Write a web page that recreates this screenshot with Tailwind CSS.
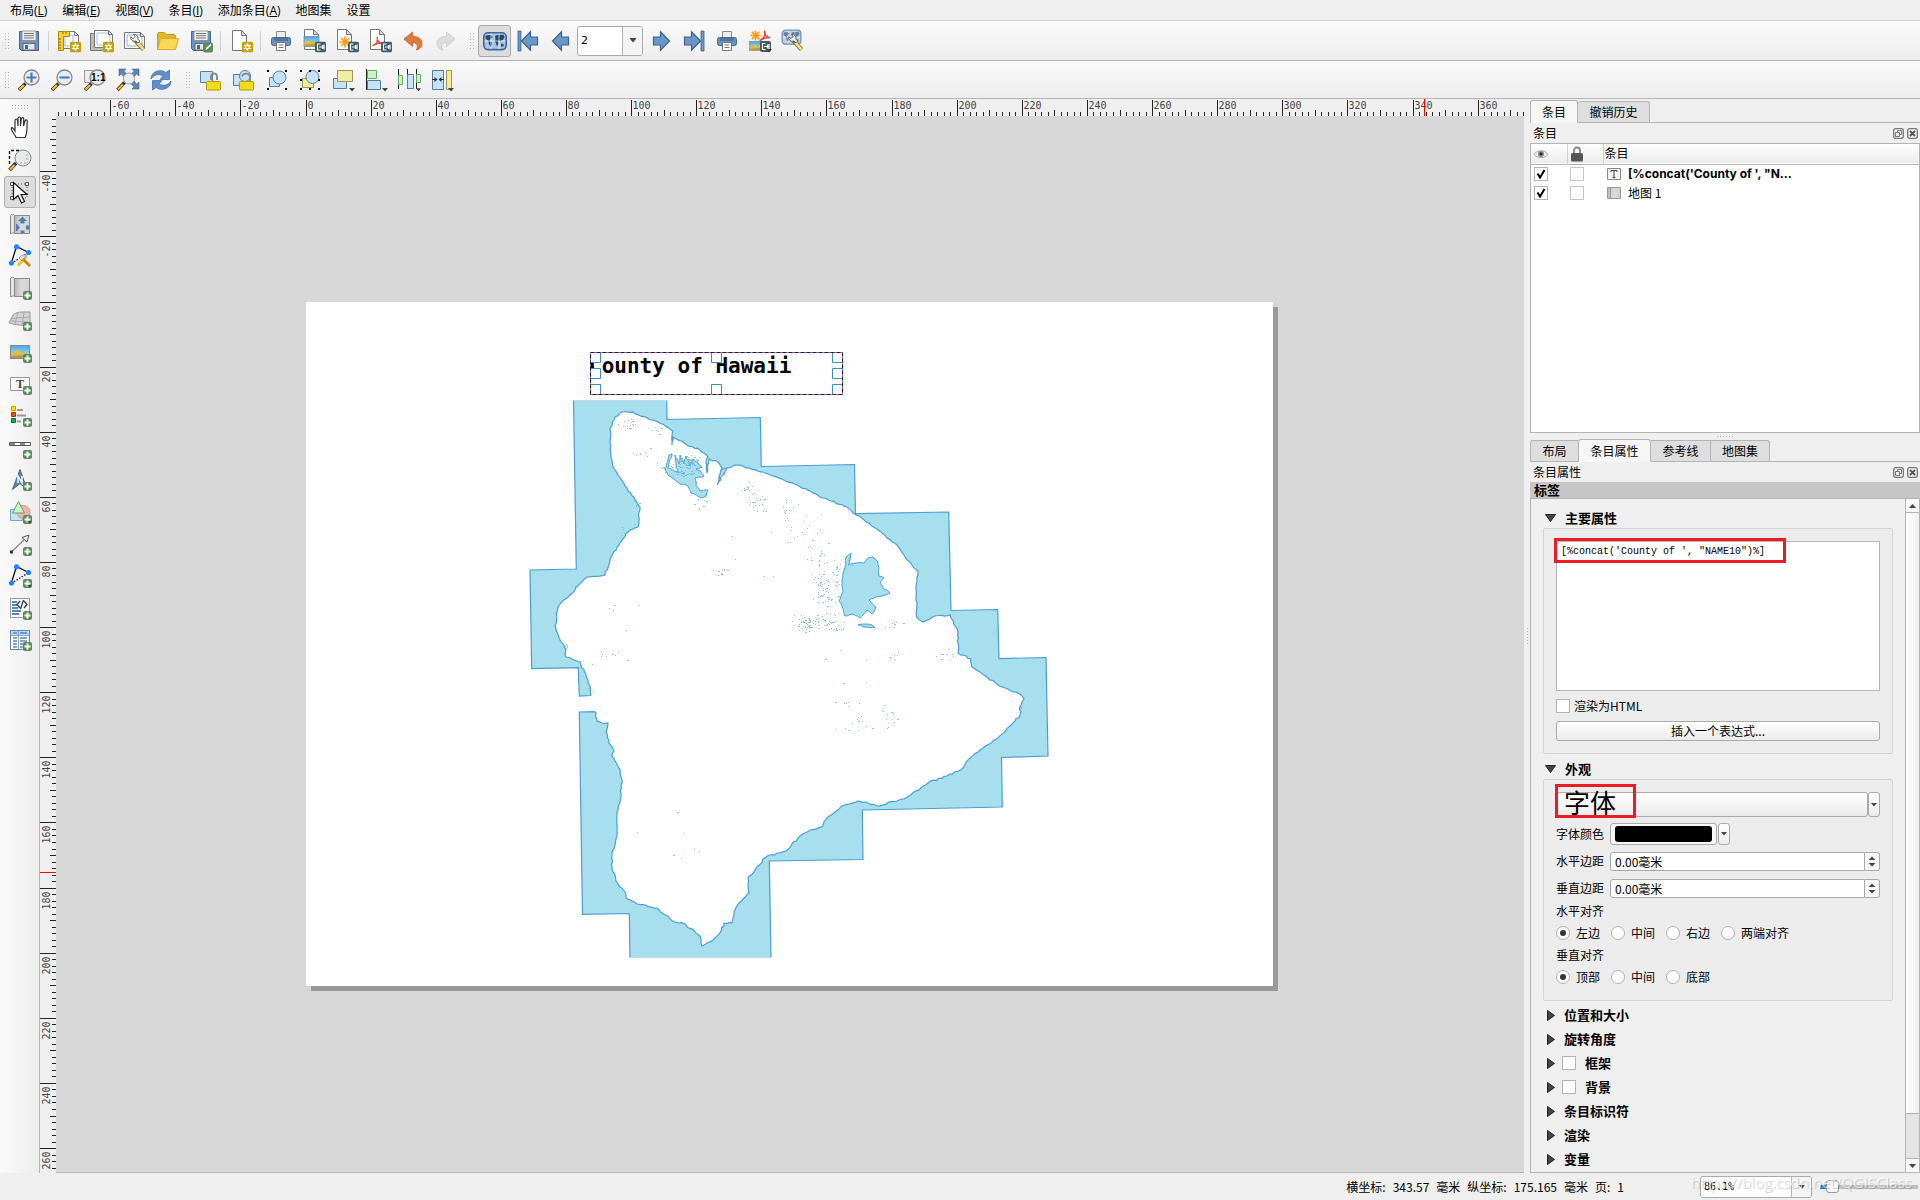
<!DOCTYPE html>
<html lang="zh-CN">
<head>
<meta charset="utf-8">
<title>布局 - 地图集</title>
<script src="https://cdn.jsdelivr.net/npm/@tailwindcss/browser@4"></script>
</head>
<body class="flex h-screen flex-col overflow-hidden bg-[#efefef] font-['Noto_Sans_CJK_SC',sans-serif] text-[12px] leading-[16px] text-black">

<svg class="absolute size-0" aria-hidden="true">
  <defs>
    <linearGradient id="g-paper" x1="0" x2="1"><stop offset="0" stop-color="#b5b5b5"/><stop offset=".45" stop-color="#dcdcdc"/><stop offset="1" stop-color="#d2d2d2"/></linearGradient>
    <linearGradient id="g-sky" x1="0" y1="0" x2="0" y2="1"><stop offset="0" stop-color="#3fa9f5"/><stop offset=".6" stop-color="#8fd0f5"/></linearGradient>
    <symbol id="b-plus" viewBox="0 0 9 9"><rect width="9" height="9" rx="2" fill="#5a8c5a"/><path d="M4.5 1.5v6M1.500 4.500h6" stroke="#fff" stroke-width="2"/></symbol>
    <symbol id="b-star" viewBox="0 0 11 11"><rect width="11" height="11" rx="1.500" fill="#c4a000"/><path d="M5.500 1.500v8M2 3.500l7 4M2 7.500l7-4" stroke="#fff" stroke-width="1.400"/><circle cx="5.500" cy="5.500" r="2.600" fill="#fff"/><circle cx="5.500" cy="5.500" r="1.200" fill="#c4a000"/></symbol>
    <symbol id="b-exp" viewBox="0 0 11 11"><rect width="11" height="11" rx="2" fill="#415a6b"/><path d="M5.500 2.500H2.500v6h3M4 5.500h5M7.500 3.500v4M9 3v5" stroke="#fff" stroke-width="1.200" fill="none"/></symbol>
    <symbol id="page" viewBox="0 0 24 24"><path d="M4.500 1.500h9l5 5v15h-14z" fill="#fff" stroke="#777"/><path d="M13.500 1.500v5h5z" fill="#ddd" stroke="#777"/></symbol>
    <symbol id="floppy" viewBox="0 0 24 24"><path d="M2.500 2.500h19v19H4.500l-2-2z" fill="#6b93c2" stroke="#48678c"/><path d="M5 2h14v9.500H5z" fill="#eee" stroke="#888" stroke-width=".8"/><path d="M7 4.500h10M7 6.700h10M7 9h10" stroke="#777"/><path d="M6 14.500h12v6.500H6z" fill="#e4e4e4" stroke="#555" stroke-width=".8"/><path d="M8 16h3v4H8z" fill="#48678c"/></symbol>
    <symbol id="wrench" viewBox="0 0 24 24"><path d="M11 10l9.500 10.500" stroke="#7a6a30" stroke-width="4.600"/><path d="M14 13l6.500 7.500" stroke="#f0dc82" stroke-width="3"/><path d="M7 7a4 4 0 0 0 5.500 4.500l2 2 2-2-2-2A4 4 0 0 0 10 4.500l1.500 2.500-2 2z" fill="#eee" stroke="#555" stroke-width=".9"/></symbol>
    <symbol id="lens" viewBox="0 0 24 24"><path d="M8.500 15.500L2 22" stroke="#333" stroke-width="3.600"/><path d="M7 17l-4.500 4.500" stroke="#f2b632" stroke-width="2.400"/><circle cx="14.500" cy="9.500" r="7.500" fill="#e8ecee" fill-opacity=".92" stroke="#888" stroke-width="1.300"/></symbol>
    <symbol id="printer" viewBox="0 0 24 24"><path d="M7.500 2.500h9v7h-9z" fill="#eee" stroke="#888"/><rect x="2.500" y="8.500" width="19" height="8" rx="2" fill="#6b93c2" stroke="#48678c"/><path d="M5 9h14v3H5z" fill="#4f76a5"/><path d="M7.500 13.500h9v8h-9z" fill="#fff" stroke="#777"/><path d="M9.500 16h5M9.500 18.500h5" stroke="#777"/></symbol>
    <symbol id="pic" viewBox="0 0 20 14"><rect x=".5" y=".5" width="19" height="13" fill="url(#g-sky)" stroke="#888"/><path d="M1 8l6-3.500 6 3 6 2V13H1z" fill="#d6bf4e"/><path d="M1 11l18-1v3H1z" fill="#b09a3c"/></symbol>
    <symbol id="globe" viewBox="0 0 24 24"><rect x=".8" y="3.800" width="22.400" height="16.800" rx="4" fill="#a9c4e4" stroke="#3f6698" stroke-width="1.600"/><path d="M2.500 6.500l5-.5 2.500 2-3 2.500L6.500 12l2.500 1.500L8 18l-2-2.500-.5-3.500-3-2.500zM12 7l2-1 6.500-.3 1 2.300-1.500 3-2 .5-.5 1.500-1.500-1.500-1 .5.500 2.500-1.500 3-1-3-1-2 .5-2.500z" fill="#24486e"/><path d="M18 14.500l2.500.5v2.500H18z" fill="#24486e"/><path d="M8 4.500v15.500M16 4.500v15.500M1.500 12h21" stroke="#fff" stroke-width=".8" opacity=".8"/></symbol>
    <symbol id="arrowL" viewBox="0 0 24 24"><path d="M3.500 12L12.500 2.800V8h7v8h-7v5.200z" fill="#6b97c8" stroke="#3f6287" stroke-width="1.200"/></symbol>
    <symbol id="scroll" viewBox="0 0 24 24"><path d="M6.500 3.500h15v18h-15z" fill="url(#g-paper)" stroke="#8a8a8a"/><path d="M2.500 3.500c0-1.500 4-1.500 4 0v16c0 1-1.500 2-4 2z" fill="#e4e4e4" stroke="#8a8a8a"/></symbol>
    <symbol id="nodes" viewBox="0 0 24 24"><path d="M3.500 18.500l5-16 12 6" fill="none" stroke="#111" stroke-width="1.300"/><path d="M20 9L4 19" stroke="#111" stroke-width="1.300" stroke-dasharray="1.500 1.500"/><g fill="#2a7fff"><circle cx="3.500" cy="19" r="2.600"/><circle cx="8.500" cy="2.800" r="2.600"/><circle cx="20.500" cy="8.500" r="2.600"/></g></symbol>
    <symbol id="lock" viewBox="0 0 12 16"><path d="M3 8V4.500a3 3 0 0 1 6 0V8" fill="none" stroke="#888" stroke-width="1.900"/></symbol>
    <symbol id="drop" viewBox="0 0 6 4"><path d="M0 0h6L3 3.600z" fill="#444"/></symbol>
    <symbol id="eight" viewBox="0 0 24 24"><path d="M2 2h2v2H2zM11 2h2v2h-2zM20 2h2v2h-2zM2 20h2v2H2zM11 20h2v2h-2zM20 20h2v2h-2zM2 11h2v2H2zM20 11h2v2h-2z"/></symbol>
    <symbol id="pdfmark" viewBox="0 0 12 12"><path d="M5.500.8c1.500 4-1 8-4.800 10 3-2.800 6-3.500 10.500-3-4-.5-5.700-3-5.700-7z" fill="none" stroke="#e8392c" stroke-width="1.300"/></symbol>
    <symbol id="aster" viewBox="0 0 12 12"><path d="M6 .5v11M.5 6h11M2 2l8 8M10 2l-8 8" stroke="#ff9a0a" stroke-width="1.700"/></symbol>
    <symbol id="dock-float" viewBox="0 0 11 11"><rect x=".7" y=".7" width="9.600" height="9.600" rx="2" fill="#f2f2f2" stroke="#777" stroke-width="1.300"/><path d="M4.500 4.500v-2h4v4h-2M2.500 4.500h4v4h-4z" fill="none" stroke="#777"/></symbol>
    <symbol id="dock-close" viewBox="0 0 11 11"><rect x=".7" y=".7" width="9.600" height="9.600" rx="2" fill="#f2f2f2" stroke="#777" stroke-width="1.300"/><path d="M3 3l5 5M8 3L3 8" stroke="#555" stroke-width="1.900"/></symbol>
    <pattern id="dots" width="3" height="3" patternUnits="userSpaceOnUse"><rect x="1" y="1" width="1" height="1" fill="#b4b4b4"/></pattern>
  </defs>
</svg>

<nav class="flex h-[21px] shrink-0 items-center gap-[15px] border-b border-[#d4d4d4] pl-[10px] pt-px font-['Open_Sans','Noto_Sans_CJK_SC',sans-serif]">
  <button>布局(<u>L</u>)</button><button>编辑(<u>E</u>)</button><button>视图(<u>V</u>)</button><button>条目(<u>I</u>)</button><button>添加条目(<u>A</u>)</button><button>地图集</button><button>设置</button>
</nav>

<div role="toolbar" class="flex h-[40px] shrink-0 items-center border-b border-[#b4b4b4] bg-linear-to-b from-[#fafafa] to-[#ededed] [&>button]:grid [&>button]:h-8 [&>button]:w-[33px] [&>button]:place-items-center [&>button>svg]:size-6">
  <svg class="ml-1 mr-[2px] h-[18px] w-[6px]"><rect width="6" height="18" fill="url(#dots)"/></svg>
  <button aria-label="保存"><svg><use href="#floppy"/></svg></button>
  <i class="mx-[3px] h-5 w-px bg-[#d0d0d0]"></i>
  <button aria-label="新建布局"><svg viewBox="0 0 24 24"><path d="M5.500 2.500h12l4 4v13h-16z" fill="#fff" stroke="#777"/><path d="M8 6h8v11H8z" fill="#fff" stroke="#9bb7dd"/><path d="M17.500 2.500v4h4z" fill="#ddd" stroke="#777"/><path d="M1.500 2.500h11v5h-6v14h-5z" fill="#f2cf3c" stroke="#b28c00"/><path d="M2 10h2M2 13h2M2 16h2M2 19h2M6 3v2M9 3v2" stroke="#8a6d00"/><use href="#b-star" x="13" y="12.500" width="11" height="11"/></svg></button>
  <button aria-label="复制布局"><svg viewBox="0 0 24 24"><path d="M.5 4.500h15v17H.5z" fill="#bbb" stroke="#777"/><path d="M4.500 1.500h14l4 4v13h-18z" fill="#fff" stroke="#777"/><path d="M7 4h11l2 3v9H7z" fill="#fff" stroke="#a9c0e2"/><path d="M18.500 1.500v4h4z" fill="#ddd" stroke="#777"/><use href="#b-star" x="13" y="12.500" width="11" height="11"/></svg></button>
  <button aria-label="布局管理器"><svg viewBox="0 0 24 24"><path d="M1.500 3.500h16l4 4v12h-20z" fill="#fff" stroke="#777"/><path d="M4 6h13l2 3v8H4z" fill="#fff" stroke="#8fb0e0"/><path d="M17.500 3.500v4h4z" fill="#ddd" stroke="#777"/><use href="#wrench" x="1" y="1" width="23" height="23"/></svg></button>
  <button aria-label="从模板添加"><svg viewBox="0 0 24 24"><path d="M1.500 20.500v-16l1-1h6l2 2h8l1 1v3" fill="#e0b52f" stroke="#c79a20"/><path d="M1.500 20.500l3-11h18l-3 11z" fill="#fbd758" stroke="#d6a92c"/></svg></button>
  <button aria-label="另存为模板"><svg viewBox="0 0 24 24"><use href="#floppy"/><rect x="14" y="13.500" width="10" height="10" rx="2" fill="#5a8c5a"/><path d="M16.500 21l1-2.500 4-3.500 1 1-4 4z" fill="#fff"/></svg></button>
  <i class="ml-[3px] mr-1 h-5 w-px bg-[#d0d0d0]"></i>
  <button aria-label="添加页"><svg viewBox="0 0 24 24"><use href="#page" x="-2"/><use href="#b-star" x="12" y="12.500" width="11" height="11"/></svg></button>
  <i class="ml-[2px] mr-[3px] h-5 w-px bg-[#d0d0d0]"></i>
  <button aria-label="打印"><svg><use href="#printer"/></svg></button>
  <button aria-label="导出图像"><svg viewBox="0 0 24 24"><use href="#page" x="-2" y="-1"/><use href="#pic" x="1" y="7" width="17" height="11"/><use href="#b-exp" x="13" y="12.500" width="11" height="11"/></svg></button>
  <button aria-label="导出SVG"><svg viewBox="0 0 24 24"><use href="#page" x="-2" y="-1"/><use href="#aster" x="4" y="7" width="12" height="12"/><use href="#b-exp" x="13" y="12.500" width="11" height="11"/></svg></button>
  <button aria-label="导出PDF"><svg viewBox="0 0 24 24"><use href="#page" x="-2" y="-1"/><use href="#pdfmark" x="4" y="7" width="11" height="11"/><use href="#b-exp" x="13" y="12.500" width="11" height="11"/></svg></button>
  <button aria-label="撤销"><svg viewBox="0 0 24 24"><path d="M3 10l8.500-7v4.500c6 0 9.500 2.500 9.500 7 0 3.500-2.500 6-6 6.500 2-2 2.500-7-3.500-7.500v4z" fill="#e07b39" stroke="#c0602a" stroke-width=".8"/></svg></button>
  <button aria-label="重做"><svg viewBox="0 0 24 24"><path d="M21 10l-8.500-7v4.500c-6 0-9.500 2.500-9.500 7 0 3.500 2.500 6 6 6.500-2-2-2.500-7 3.500-7.500v4z" fill="#dcdedc" stroke="#c8cac8" stroke-width=".8"/></svg></button>
  <svg class="ml-[7px] mr-[3px] h-[18px] w-[6px]"><rect width="6" height="18" fill="url(#dots)"/></svg>
  <button aria-label="预览地图集" class="rounded-[3px] border border-[#a8a8a8] bg-[#dcdcdc]"><svg><use href="#globe"/></svg></button>
  <button aria-label="第一个"><svg viewBox="0 0 24 24"><path d="M2 2h3v20H2z" fill="#6b97c8" stroke="#3f6287" stroke-width=".8"/><use href="#arrowL" x="2"/></svg></button>
  <button aria-label="上一个"><svg><use href="#arrowL"/></svg></button>
  <span class="mr-px grid h-[30px] w-[66px]">
    <select aria-label="页面" class="col-start-1 row-start-1 appearance-none rounded-[3px] border border-[#aaa] bg-white pl-[3px] font-['DejaVu_Sans',sans-serif] text-[11px]"><option>2</option></select>
    <span class="pointer-events-none col-start-1 row-start-1 my-px mr-px grid w-5 place-items-center justify-self-end rounded-r-[2px] border-l border-[#b4b4b4] bg-[#f4f4f4]"><svg class="h-[5px] w-2" viewBox="0 0 6 4"><use href="#drop"/></svg></span>
  </span>
  <button aria-label="下一个"><svg viewBox="0 0 24 24"><use href="#arrowL" transform="matrix(-1 0 0 1 24 0)"/></svg></button>
  <button aria-label="最后一个"><svg viewBox="0 0 24 24"><path d="M19 2h3v20h-3z" fill="#6b97c8" stroke="#3f6287" stroke-width=".8"/><use href="#arrowL" transform="matrix(-1 0 0 1 22 0)"/></svg></button>
  <button aria-label="打印地图集"><svg><use href="#printer"/></svg></button>
  <button aria-label="导出地图集"><svg viewBox="0 0 24 24"><use href="#aster" x="2" y="1" width="11" height="11"/><use href="#pdfmark" x="11" y="1" width="12" height="12"/><use href="#pic" x="1" y="12" width="14" height="10"/><use href="#b-exp" x="12" y="12" width="11" height="11"/><use href="#drop" x="18" y="20" width="6" height="4"/></svg></button>
  <button aria-label="地图集设置"><svg viewBox="0 0 24 24"><use href="#globe" x="0" y="-2" width="21" height="20" opacity=".7"/><use href="#wrench" x="1" y="1" width="23" height="23"/></svg></button>
</div>

<div role="toolbar" class="flex h-[38px] shrink-0 items-center border-b border-[#b4b4b4] bg-linear-to-b from-[#fafafa] to-[#ededed] [&>button]:grid [&>button]:h-8 [&>button]:w-[33px] [&>button]:place-items-center [&>button>svg]:size-6">
  <svg class="ml-1 mr-[2px] h-[18px] w-[6px]"><rect width="6" height="18" fill="url(#dots)"/></svg>
  <button aria-label="放大"><svg viewBox="0 0 24 24"><use href="#lens"/><path d="M14.500 4.500v10M9.500 9.500h10" stroke="#4a7db5" stroke-width="2.200"/></svg></button>
  <button aria-label="缩小"><svg viewBox="0 0 24 24"><use href="#lens"/><path d="M9.500 9.500h10" stroke="#4a7db5" stroke-width="2.200"/></svg></button>
  <button aria-label="缩放到100%"><svg viewBox="0 0 24 24"><path d="M1.500 2.500h9v12h-9z" fill="#eee" stroke="#999"/><use href="#lens"/><text x="8" y="13" font-family="Liberation Sans" font-weight="bold" font-size="10">1:1</text></svg></button>
  <button aria-label="全图"><svg viewBox="0 0 24 24"><g fill="#5b86b8" stroke="#3f6287" stroke-width=".6"><path d="M3 1h7L7.800 3.200 12 7 9 10 5.200 5.800 3 8zM23 1v7l-2.200-2.200L17 10l-3-3 4.200-3.800L16 1zM23 21h-7l2.200-2.200L14 15l3-3 3.800 4.200L23 14z"/></g><circle cx="13" cy="10.500" r="5.500" fill="#e8ecee" stroke="#999"/><path d="M8.500 14.500L1.500 22" stroke="#333" stroke-width="3.400"/><path d="M7 16.500l-5 5" stroke="#f2b632" stroke-width="2.200"/></svg></button>
  <button aria-label="刷新"><svg viewBox="0 0 24 24"><path d="M2 11C2 5 8 1.500 14 3l3 1.500L20.500 2v9.500H11l3-3.500C10 5.500 5 6.500 2 11z" fill="#5f8fca" stroke="#4573ab" stroke-width=".8"/><path d="M22 13c0 6-6 9.500-12 8l-3-1.500L3.500 22v-9.500H13l-3 3.500c4 2.500 9 1.500 12-3z" fill="#5f8fca" stroke="#4573ab" stroke-width=".8"/></svg></button>
  <svg class="ml-2 mr-[3px] h-[18px] w-[6px]"><rect width="6" height="18" fill="url(#dots)"/></svg>
  <button aria-label="锁定"><svg viewBox="0 0 24 24"><path d="M1.500 3.500h12v11h-12z" fill="#c6e2f8" stroke="#5a7d96"/><use href="#lock" x="9" y="4" width="12" height="16"/><rect x="7.500" y="13.500" width="14" height="8.500" rx="1" fill="#f0dc1e" stroke="#b49a00"/></svg></button>
  <button aria-label="解锁"><svg viewBox="0 0 24 24"><path d="M1.500 6.500h9v11h-9z" fill="#c6e2f8" stroke="#5a7d96"/><circle cx="13" cy="8" r="5.500" fill="#c6e2f8" stroke="#5a7d96"/><path d="M10 8.500c1-4 8-4 8 1v4" fill="none" stroke="#888" stroke-width="1.900"/><rect x="7.500" y="13.500" width="14" height="8.500" rx="1" fill="#f0dc1e" stroke="#b49a00"/></svg></button>
  <button aria-label="组合"><svg viewBox="0 0 24 24"><path d="M4.500 9.500h10v9h-10z" fill="#c6e2f8" stroke="#5a7d96"/><circle cx="14.500" cy="9.500" r="6.500" fill="#c6e2f8" stroke="#5a7d96"/><path d="M2 2h2v2H2zM20 2h2v2h-2zM2 20h2v2H2zM20 20h2v2h-2z"/></svg></button>
  <button aria-label="取消组合"><svg viewBox="0 0 24 24"><path d="M4.500 10.500h11v9h-11z" fill="#f0eda0" stroke="#9a9650"/><circle cx="14.500" cy="9" r="6.500" fill="#c6e2f8" stroke="#5a7d96"/><use href="#eight"/></svg></button>
  <button aria-label="置顶"><svg viewBox="0 0 24 24"><path d="M2.500 10.500h13v10h-13z" fill="#c6e2f8" stroke="#5a7d96"/><path d="M6.500 2.500h15v11h-15z" fill="#f0eda0" stroke="#9a9650"/><use href="#drop" x="18" y="20" width="6" height="4"/></svg></button>
  <button aria-label="左对齐"><svg viewBox="0 0 24 24"><path d="M2.500 1v21" stroke="#222"/><path d="M3.500 2.500h9v8h-9z" fill="#c8f5c8" stroke="#6aa86a"/><path d="M3.500 12.500h13v9h-13z" fill="#c6e2f8" stroke="#5a7d96"/><use href="#drop" x="18" y="20" width="6" height="4"/></svg></button>
  <button aria-label="分布"><svg viewBox="0 0 24 24"><path d="M1.500 1v20M10.500 1v20M19.500 1v20" stroke="#222"/><path d="M1.500 7.500h4v9h-4zM19.500 6.500h4v8h-4z" fill="#c8f5c8" stroke="#6aa86a"/><path d="M10.500 6.500h6v14h-6z" fill="#c6e2f8" stroke="#5a7d96"/><use href="#drop" x="19" y="20" width="5" height="4"/></svg></button>
  <button aria-label="调整大小"><svg viewBox="0 0 24 24"><path d="M2.500 2.500h11v19h-11z" fill="#c6e2f8" stroke="#5a7d96"/><path d="M16.500 2.500h5v19h-5z" fill="#f0eda0" stroke="#9a9650"/><path d="M2 11.500h4M14 11.500h-4" stroke="#333"/><path d="M4.500 9l3 2.500-3 2.500zM11.500 9l-3 2.500 3 2.500z" fill="#333"/><use href="#drop" x="18" y="20" width="6" height="4"/></svg></button>
</div>

<main class="flex min-h-0 flex-1">
  <div role="toolbar" aria-orientation="vertical" class="flex w-10 shrink-0 flex-col items-center border-r border-[#b4b4b4] bg-linear-to-r from-[#fafafa] to-[#ededed] [&>button]:grid [&>button]:size-8 [&>button]:shrink-0 [&>button]:place-items-center [&>button>svg]:size-6">
    <svg class="mb-[2px] mt-[5px] h-[6px] w-[18px]"><rect width="18" height="6" fill="url(#dots)"/></svg>
    <button aria-label="平移"><svg viewBox="0 0 24 24"><path d="M8 21.500c-1-3-3.500-5-4.500-8-.7-2.500 1-2.500 2.500 0L7 15V4.500c0-2 2.200-2 2.500 0L10 10V2.500c.2-2 2.500-2 2.500 0V10l.8-7c.3-2 2.500-1.500 2.400 0L15.500 10l1.500-5c.7-1.800 2.600-1 2.300.6C18.500 11 20 16 17 21.500z" fill="#fff" stroke="#333" stroke-width="1.200"/></svg></button>
    <button aria-label="缩放"><svg viewBox="0 0 24 24"><path d="M1.500 16V2.500H12" fill="none" stroke="#111" stroke-width="1.400" stroke-dasharray="3 2"/><path d="M8 15L1.500 22" stroke="#333" stroke-width="3.600"/><path d="M6.500 17l-4.500 4.500" stroke="#f2b632" stroke-width="2.200"/><circle cx="15" cy="10" r="8" fill="#e6e9ea" stroke="#888"/><path d="M8 15h10M19 6v9" stroke="#aaa" stroke-dasharray="2 2"/></svg></button>
    <button aria-label="选择" class="rounded-[3px] border border-[#b0b0b0] bg-[#dcdcdc]"><svg viewBox="0 0 24 24"><path d="M4 4h15v14H4z" fill="none" stroke="#555" stroke-dasharray="1 2"/><path d="M2.500 2.500h3v3h-3zM17.500 2.500h3v3h-3zM2.500 16.500h3v3h-3z" fill="#eee" stroke="#555"/><path d="M5.500 2.500v17l4.500-4 3.500 7.500 3-1.500-3.500-7h6z" fill="#fff" stroke="#111" stroke-width="1.200"/></svg></button>
    <button aria-label="移动内容"><svg viewBox="0 0 24 24"><use href="#scroll"/><path d="M14.500 4.500l4.500 4.500h-2.500v2.500h-4V9H10zM8 12h1l3 3.500L9 19H8zM21 13.500v4h-3v-4zM12.500 18.500h4V21h-4z" fill="#4f7fb5"/></svg></button>
    <button aria-label="编辑节点"><svg viewBox="0 0 24 24"><use href="#nodes"/><path d="M10 21.500l8-9" stroke="#f5c518" stroke-width="3"/><path d="M14 14l8 8" stroke="#c98712" stroke-width="3"/><path d="M11 14c2-3 6-4 8-2l-3 2-2 3z" fill="#ddd" stroke="#888" stroke-width=".7"/></svg></button>
    <button aria-label="添加地图"><svg viewBox="0 0 24 24"><use href="#scroll" y="-1"/><use href="#b-plus" x="15" y="15" width="9" height="9"/></svg></button>
    <button aria-label="添加3D地图"><svg viewBox="0 0 24 24"><path d="M5 7c4-3.500 8-3 17-3v14c-6-1-10 0-21-3z" fill="#d4d4d4" stroke="#999"/><path d="M3 11c6-2 12-1 19-2M2 13c6 0 12 1 20 1M10 4L7 16M16 4l-2 14" stroke="#aaa" fill="none"/><use href="#b-plus" x="15" y="14" width="9" height="9"/></svg></button>
    <button aria-label="添加图片"><svg viewBox="0 0 24 24"><use href="#pic" x="2" y="5" width="20" height="14"/><use href="#b-plus" x="15" y="14" width="9" height="9"/></svg></button>
    <button aria-label="添加标签"><svg viewBox="0 0 24 24"><path d="M2.500 5.500h19v13h-19z" fill="#f6f6f6" stroke="#999"/><text x="8" y="16" font-family="Liberation Serif" font-weight="bold" font-size="12" fill="#444">T</text><use href="#b-plus" x="15" y="14" width="9" height="9"/></svg></button>
    <button aria-label="添加图例"><svg viewBox="0 0 24 24"><path d="M3.500 2.500h4v4h-4z" fill="#fce000" stroke="#d99100"/><path d="M3.500 8.500h4v4h-4z" fill="#f04e00" stroke="#b53000"/><path d="M3.500 14.500h4v4h-4z" fill="#00b050" stroke="#064"/><path d="M9 6h6M9 11.500h9M9 17.500h4" stroke="#999" stroke-width="2"/><use href="#b-plus" x="15" y="14" width="9" height="9"/></svg></button>
    <button aria-label="添加比例尺"><svg viewBox="0 0 24 24"><path d="M1.500 6.500h21v3h-21z" fill="#fff" stroke="#555"/><path d="M2 8h5M12 8h5" stroke="#888" stroke-width="2"/><use href="#b-plus" x="15" y="14" width="9" height="9"/></svg></button>
    <button aria-label="添加指北针"><svg viewBox="0 0 24 24"><path d="M12 1.500l7 20-7-6-7.500 6z" fill="#5f87b5" stroke="#3f6287"/><path d="M10 15V8l4 7V8" fill="none" stroke="#fff" stroke-width="1.500"/><use href="#b-plus" x="15" y="14" width="9" height="9"/></svg></button>
    <button aria-label="添加形状"><svg viewBox="0 0 24 24"><path d="M2.500 9.500h12v11h-12z" fill="#c6e2f8" stroke="#7aa5c8"/><circle cx="15.500" cy="12" r="6.500" fill="#f7b0ac" stroke="#e09090"/><path d="M10.500 1.500l6 11.500h-12z" fill="#c8f5c8" stroke="#5fa35f"/><use href="#b-plus" x="15" y="15" width="9" height="9"/><use href="#drop" x="19" y="21" width="5" height="3"/></svg></button>
    <button aria-label="添加箭头"><svg viewBox="0 0 24 24"><path d="M3.500 20L18 6" stroke="#888" stroke-width="1.300"/><path d="M21 3l-2 7-5-4.500z" fill="#f0f0f0" stroke="#555"/><path d="M2 18.500h3v3H2z" fill="#333"/><use href="#b-plus" x="15" y="15" width="9" height="9"/></svg></button>
    <button aria-label="添加节点"><svg viewBox="0 0 24 24"><use href="#nodes"/><use href="#b-plus" x="15" y="15" width="9" height="9"/><use href="#drop" x="19" y="21" width="5" height="3"/></svg></button>
    <button aria-label="添加HTML"><svg viewBox="0 0 24 24"><path d="M2.500 2.500h19v19h-19z" fill="#f6f6f6" stroke="#999"/><path d="M4 6h5M4 9h5M4 12h6M4 15h9M4 18h7" stroke="#5b86b8" stroke-width="1.800"/><path d="M12 5L9 8.500l3 3.500M16 5l3 3.500-3 3.500M15.500 4l-3 9" fill="none" stroke="#333" stroke-width="1.200"/><use href="#b-plus" x="15" y="15" width="9" height="9"/></svg></button>
    <button aria-label="添加属性表"><svg viewBox="0 0 24 24"><path d="M2.500 2.500h19v19h-19z" fill="#fff" stroke="#5b86b8"/><path d="M3 3h18v4H3z" fill="#b9d6f0"/><path d="M5 5h4M12 5h7M5 10h4M12 10h7M5 13h4M12 13h7M5 16h4M12 16h5M5 19h4M12 19h3" stroke="#5b86b8" stroke-width="1.300"/><path d="M10.500 3v18M3 7.500h18" stroke="#5b86b8" stroke-width=".7"/><use href="#b-plus" x="15" y="14" width="9" height="9"/></svg></button>
  </div>

  <section class="flex min-w-0 flex-1 flex-col" aria-label="画布">
    <div class="flex h-[17px] shrink-0">
      <div class="w-4 shrink-0"></div>
      <div class="min-w-0 flex-1"><svg id="hruler" class="block size-full font-['DejaVu_Sans_Mono',monospace] text-[10px]"></svg></div>
    </div>
    <div class="flex min-h-0 flex-1">
      <div class="w-4 shrink-0"><svg id="vruler" class="block size-full font-['DejaVu_Sans_Mono',monospace] text-[10px]"></svg></div>
      <div class="relative min-w-0 flex-1 overflow-hidden border-b border-[#b4b4b4] bg-[#d7d7d7]">
        <svg class="absolute left-[250px] top-[186px] h-[684px] w-[967px] bg-white shadow-[5px_5px_0_#999]" viewBox="306 302 967 684">
          <path id="island" fill="#a8dfee" stroke="#4a9fd0" stroke-width="1.200"/>
          <g id="lakes" fill="#a8dfee" stroke="#4a9fd0"></g>
          <path id="specks" fill="none" stroke="#6fb3dc" stroke-width="1" opacity=".8"/>
          <path d="M573 399.500h95M629 958.500h143" stroke="#fff" stroke-width="2"/>
          <text x="589" y="373" class="font-['DejaVu_Sans_Mono',monospace] text-[21px] font-bold">County of Hawaii</text>
          <g fill="#fff" stroke="#3a8fc4"><path d="M590.500 352.500h10v10h-10zM590.500 368.500h10v10h-10zM590.500 384.500h10v10h-10zM711.500 352.500h10v10h-10zM711.500 384.500h10v10h-10zM832.500 352.500h10v10h-10zM832.500 368.500h10v10h-10zM832.500 384.500h10v10h-10z"/></g>
          <path d="M590.500 352.500h252v42h-252z" fill="none" stroke="#4aa0d8"/>
          <path d="M590.500 352.500h252v42h-252z" fill="none" stroke="#5a0030" stroke-dasharray="4 2"/>
        </svg>
      </div>
    </div>
  </section>

  <div class="grid w-[6px] shrink-0 place-items-center"><svg class="h-[18px] w-[3px]"><rect width="3" height="18" fill="url(#dots)"/></svg></div>

  <aside class="flex w-[390px] shrink-0 flex-col">
    <div role="tablist" class="flex h-6 shrink-0 items-end border-b border-[#b4b4b4] pt-px">
      <button role="tab" class="-mb-px h-[23px] w-12 rounded-t-[3px] border border-b-0 border-[#b4b4b4] bg-[#f6f6f6]">条目</button>
      <button role="tab" class="h-[21px] w-[72px] rounded-t-[3px] border border-b-0 border-l-0 border-[#b4b4b4] bg-[#dedede]">撤销历史</button>
    </div>
    <div class="flex h-5 shrink-0 items-center gap-[3px] pl-[3px] pr-[2px]"><span class="flex-1">条目</span><button aria-label="浮动"><svg class="size-[11px]"><use href="#dock-float"/></svg></button><button aria-label="关闭"><svg class="size-[11px]"><use href="#dock-close"/></svg></button></div>
    <div class="h-[290px] shrink-0 border border-[#b4b4b4] bg-white">
      <table class="w-full table-fixed border-collapse text-left">
        <colgroup><col class="w-9"><col class="w-9"><col></colgroup>
        <thead><tr class="h-5 border-b border-[#b4b4b4] bg-linear-to-b from-[#fdfdfd] to-[#ececec]">
          <th class="border-r border-[#d0d0d0] p-0 pl-[2px]"><svg class="h-3 w-4" viewBox="0 0 16 12"><path d="M1 6.500C4 1.500 12 1.500 15 6.500 12 10.500 4 10.500 1 6.500z" fill="#eee" stroke="#aaa"/><circle cx="8" cy="6" r="3" fill="#888"/><circle cx="8" cy="6" r="1.400" fill="#222"/></svg></th>
          <th class="border-r border-[#d0d0d0] p-0 pl-[3px]"><svg class="h-4 w-3" viewBox="0 0 12 16"><use href="#lock"/><rect y="7" width="12" height="8.500" rx="1.500" fill="#555"/></svg></th>
          <th class="p-0 pb-[2px] pl-px font-normal">条目</th></tr></thead>
        <tbody>
          <tr class="h-[19px]"><td class="p-0 pl-[3px]"><span class="grid size-[14px]"><input type="checkbox" checked aria-label="可见" class="col-start-1 row-start-1 size-[14px] appearance-none border border-[#b4b4b4] bg-white"><svg class="pointer-events-none col-start-1 row-start-1 size-[14px]" viewBox="0 0 14 14"><path d="M3.500 6.500l2.500 4 4.500-7.500" fill="none" stroke="#000" stroke-width="2"/></svg></span></td>
            <td class="p-0 pl-[3px]"><input type="checkbox" aria-label="锁定" class="block size-[14px] appearance-none border border-[#c4c4c4] bg-white"></td>
            <td class="p-0"><span class="flex items-center gap-[7px] pl-1 font-['Inter','Noto_Sans_CJK_SC',sans-serif] font-bold"><svg class="h-3 w-[14px]" viewBox="0 0 14 12"><path d="M.5.5h13v11H.5z" fill="#f4f4f4" stroke="#888"/><path d="M4 4V2.500h6V4M7 2.500v7M5.500 9.500h3" fill="none" stroke="#444"/></svg>[%concat('County of ', "N...</span></td></tr>
          <tr class="h-[19px]"><td class="p-0 pl-[3px]"><span class="grid size-[14px]"><input type="checkbox" checked aria-label="可见" class="col-start-1 row-start-1 size-[14px] appearance-none border border-[#b4b4b4] bg-white"><svg class="pointer-events-none col-start-1 row-start-1 size-[14px]" viewBox="0 0 14 14"><path d="M3.500 6.500l2.500 4 4.500-7.500" fill="none" stroke="#000" stroke-width="2"/></svg></span></td>
            <td class="p-0 pl-[3px]"><input type="checkbox" aria-label="锁定" class="block size-[14px] appearance-none border border-[#c4c4c4] bg-white"></td>
            <td class="p-0"><span class="flex items-center gap-[7px] pl-1"><svg class="h-3 w-[14px]" viewBox="0 0 14 12"><path d="M.5.5h13v11H.5z" fill="url(#g-paper)" stroke="#999"/><path d="M3.500 1v10" stroke="#999"/></svg>地图 1</span></td></tr>
        </tbody>
      </table>
    </div>
    <div class="grid h-[6px] shrink-0 place-items-center"><svg class="h-[3px] w-[18px]"><rect width="18" height="3" fill="url(#dots)"/></svg></div>
    <div role="tablist" class="flex h-[23px] shrink-0 items-end border-b border-[#b4b4b4]">
      <button role="tab" class="h-[21px] w-12 rounded-tl-[3px] border border-b-0 border-r-0 border-[#b4b4b4] bg-[#dedede]">布局</button>
      <button role="tab" class="-mb-px h-[23px] w-[73px] rounded-t-[3px] border border-b-0 border-[#b4b4b4] bg-[#f6f6f6]">条目属性</button>
      <button role="tab" class="h-[21px] w-[60px] border border-b-0 border-l-0 border-[#b4b4b4] bg-[#dedede]">参考线</button>
      <button role="tab" class="h-[21px] w-[59px] rounded-tr-[3px] border border-b-0 border-l-0 border-[#b4b4b4] bg-[#dedede]">地图集</button>
    </div>
    <div class="flex h-5 shrink-0 items-center gap-[3px] pl-[3px] pr-[2px]"><span class="flex-1">条目属性</span><button aria-label="浮动"><svg class="size-[11px]"><use href="#dock-float"/></svg></button><button aria-label="关闭"><svg class="size-[11px]"><use href="#dock-close"/></svg></button></div>
    <h2 class="h-4 shrink-0 bg-[#c6c6c6] pl-1 text-[13px] font-bold leading-[15px]">标签</h2>
    <div class="flex min-h-0 flex-1 border border-[#b4b4b4]">
      <div class="min-w-0 flex-1 overflow-hidden px-3">
        <h3 class="mt-[11px] flex h-4 items-center gap-[9px] pl-[2px] text-[13px] font-bold"><svg class="h-2 w-[11px]" viewBox="0 0 11 8"><path d="M.5.5h10l-5 7z" fill="#444" stroke="#222"/></svg>主要属性</h3>
        <div class="relative mt-[2px] flex h-[226px] flex-col rounded-[2px] border border-[#d4d4d4] bg-[#ececec] px-3 pt-3">
          <textarea aria-label="标签文本" class="h-[150px] resize-none border border-[#b4b4b4] bg-white px-1 py-[3px] font-['Liberation_Mono',monospace] text-[10px] leading-[14px]">[%concat('County of ', "NAME10")%]</textarea>
          <div class="pointer-events-none absolute left-[10px] top-[9px] h-[25px] w-[232px] border-3 border-[#ed1c24]"></div>
          <label class="mt-[7px] flex h-4 items-center gap-1"><input type="checkbox" class="size-[14px] appearance-none border border-[#b4b4b4] bg-white">渲染为HTML</label>
          <button class="mt-[7px] h-5 rounded-[3px] border border-[#aaa] bg-linear-to-b from-white to-[#ebebeb] leading-[18px]">插入一个表达式...</button>
        </div>
        <h3 class="mt-[7px] flex h-4 items-center gap-[9px] pl-[2px] text-[13px] font-bold"><svg class="h-2 w-[11px]" viewBox="0 0 11 8"><path d="M.5.5h10l-5 7z" fill="#444" stroke="#222"/></svg>外观</h3>
        <div class="relative mt-[2px] flex h-[222px] flex-col rounded-[2px] border border-[#d4d4d4] bg-[#ececec] px-3 pt-3">
          <div class="flex h-[25px]"><button class="flex-1 rounded-[3px] border border-[#aaa] bg-linear-to-b from-white to-[#ebebeb] pl-[7px] text-left font-['Liberation_Serif','Noto_Sans_CJK_SC',serif] text-[26px] leading-[22px]">字体</button><button aria-label="字体菜单" class="grid w-3 place-items-center rounded-[3px] border border-[#aaa] bg-linear-to-b from-white to-[#ebebeb]"><svg class="h-1 w-[6px]"><use href="#drop"/></svg></button></div>
          <div class="pointer-events-none absolute left-[11px] top-1 h-[34px] w-[81px] border-3 border-[#ed1c24]"></div>
          <div class="mt-[6px] flex h-[22px] items-center"><span class="w-[54px]">字体颜色</span><button aria-label="字体颜色" class="h-[22px] w-[107px] rounded-[3px] border border-[#aaa] bg-[#f8f8f8] px-1 py-[2px]"><span class="block h-4 rounded-[3px] bg-black"></span></button><button aria-label="颜色菜单" class="ml-px grid h-[22px] w-3 place-items-center rounded-[3px] border border-[#aaa] bg-linear-to-b from-white to-[#ebebeb]"><svg class="h-1 w-[6px]"><use href="#drop"/></svg></button></div>
          <div class="mt-[6px] flex h-5 items-center"><label for="hm" class="w-[54px]">水平边距</label><input id="hm" value="0.00毫米" class="h-[19px] min-w-0 flex-1 rounded-l-[3px] border border-[#aaa] bg-white pl-1"><button aria-label="调整" class="grid h-[19px] w-[15px] place-items-center rounded-r-[3px] border border-l-0 border-[#aaa] bg-[#f8f8f8]"><svg class="h-[11px] w-2" viewBox="0 0 8 11"><path d="M.5 4L4 .5 7.500 4zM.5 7L4 10.500 7.500 7z" fill="#444"/></svg></button></div>
          <div class="mt-[7px] flex h-5 items-center"><label for="vm" class="w-[54px]">垂直边距</label><input id="vm" value="0.00毫米" class="h-[19px] min-w-0 flex-1 rounded-l-[3px] border border-[#aaa] bg-white pl-1"><button aria-label="调整" class="grid h-[19px] w-[15px] place-items-center rounded-r-[3px] border border-l-0 border-[#aaa] bg-[#f8f8f8]"><svg class="h-[11px] w-2" viewBox="0 0 8 11"><path d="M.5 4L4 .5 7.500 4zM.5 7L4 10.500 7.500 7z" fill="#444"/></svg></button></div>
          <fieldset class="mt-1">
            <legend class="h-[18px] leading-[18px]">水平对齐</legend>
            <div class="flex h-[26px] items-center gap-[11px] [&_input]:grid [&_input]:size-[14px] [&_input]:appearance-none [&_input]:place-items-center [&_input]:rounded-full [&_input]:border [&_input]:border-[#b0b0b0] [&_input]:bg-white [&_label]:flex [&_label]:items-center [&_label]:gap-[6px]">
              <label><input type="radio" name="ha" checked class="before:size-[6px] before:rounded-full checked:before:bg-[#333]">左边</label><label><input type="radio" name="ha">中间</label><label><input type="radio" name="ha">右边</label><label><input type="radio" name="ha">两端对齐</label>
            </div>
          </fieldset>
          <fieldset>
            <legend class="h-[18px] leading-[18px]">垂直对齐</legend>
            <div class="flex h-[26px] items-center gap-[11px] [&_input]:grid [&_input]:size-[14px] [&_input]:appearance-none [&_input]:place-items-center [&_input]:rounded-full [&_input]:border [&_input]:border-[#b0b0b0] [&_input]:bg-white [&_label]:flex [&_label]:items-center [&_label]:gap-[6px]">
              <label><input type="radio" name="va" checked class="before:size-[6px] before:rounded-full checked:before:bg-[#333]">顶部</label><label><input type="radio" name="va">中间</label><label><input type="radio" name="va">底部</label>
            </div>
          </fieldset>
        </div>
        <div class="mt-[2px] flex flex-col text-[13px] font-bold [&>div]:flex [&>div]:h-6 [&>div]:items-center [&_svg]:ml-1 [&_svg]:mr-[9px] [&_svg]:h-[11px] [&_svg]:w-2">
          <div><svg viewBox="0 0 8 11"><path d="M.5.5v10l7-5z" fill="#444" stroke="#222"/></svg>位置和大小</div>
          <div><svg viewBox="0 0 8 11"><path d="M.5.5v10l7-5z" fill="#444" stroke="#222"/></svg>旋转角度</div>
          <div><svg viewBox="0 0 8 11"><path d="M.5.5v10l7-5z" fill="#444" stroke="#222"/></svg><label class="flex items-center gap-[9px]"><input type="checkbox" class="-ml-[2px] size-[14px] appearance-none border border-[#b4b4b4] bg-white">框架</label></div>
          <div><svg viewBox="0 0 8 11"><path d="M.5.5v10l7-5z" fill="#444" stroke="#222"/></svg><label class="flex items-center gap-[9px]"><input type="checkbox" class="-ml-[2px] size-[14px] appearance-none border border-[#b4b4b4] bg-white">背景</label></div>
          <div><svg viewBox="0 0 8 11"><path d="M.5.5v10l7-5z" fill="#444" stroke="#222"/></svg>条目标识符</div>
          <div><svg viewBox="0 0 8 11"><path d="M.5.5v10l7-5z" fill="#444" stroke="#222"/></svg>渲染</div>
          <div><svg viewBox="0 0 8 11"><path d="M.5.5v10l7-5z" fill="#444" stroke="#222"/></svg>变量</div>
        </div>
      </div>
      <div class="flex w-[14px] shrink-0 flex-col border-l border-[#b4b4b4] bg-[#e4e4e4]">
        <button aria-label="向上" class="grid h-[14px] place-items-center border-b border-[#b4b4b4] bg-[#f8f8f8]"><svg class="h-1 w-[7px]" viewBox="0 0 7 4"><path d="M0 4h7L3.500 0z" fill="#444"/></svg></button>
        <div class="flex-1 border-b border-[#b4b4b4] bg-linear-to-r from-white to-[#f0f0f0]"></div>
        <div class="h-11"></div>
        <button aria-label="向下" class="grid h-[14px] place-items-center border-t border-[#b4b4b4] bg-[#f8f8f8]"><svg class="h-1 w-[7px]" viewBox="0 0 7 4"><path d="M0 0h7L3.500 4z" fill="#444"/></svg></button>
      </div>
    </div>
  </aside>
</main>

<footer class="relative flex h-[27px] shrink-0 items-center justify-end pr-[2px]">
  <div class="mr-[76px] flex gap-[7px]"><span>横坐标:</span><span>343.57</span><span>毫米</span><span>纵坐标:</span><span>175.165</span><span>毫米</span><span>页:</span><span>1</span></div>
  <span class="grid h-[22px] w-[112px]">
    <select aria-label="缩放" class="col-start-1 row-start-1 appearance-none rounded-[3px] border border-[#aaa] bg-white pl-[3px] font-['DejaVu_Sans_Mono',monospace] text-[10px]"><option>86.1%</option></select>
    <span class="pointer-events-none col-start-1 row-start-1 my-px mr-px grid w-5 place-items-center justify-self-end rounded-r-[2px] border-l border-[#b4b4b4] bg-[#f4f4f4]"><svg class="h-1 w-[6px]"><use href="#drop"/></svg></span>
  </span>
  <input type="range" aria-label="缩放滑块" min="0" max="100" value="7" class="ml-2 h-4 w-[98px] appearance-none bg-[linear-gradient(to_right,#1e8fe8_10px,#c0c0c0_10px)] bg-size-[100%_4px] bg-center bg-no-repeat [&::-webkit-slider-thumb]:size-[13px] [&::-webkit-slider-thumb]:appearance-none [&::-webkit-slider-thumb]:rounded-[3px] [&::-webkit-slider-thumb]:border [&::-webkit-slider-thumb]:border-[#999] [&::-webkit-slider-thumb]:bg-[#f8f8f8]">
  <span class="pointer-events-none absolute right-2 top-0 font-['Open_Sans',sans-serif] text-[15px] leading-[18px] text-white/60 [text-shadow:1px_1px_1px_#0003]">https://blog.csdn.net/QGISClass</span>
</footer>

<script>
const NS = 'http://www.w3.org/2000/svg', PX_PER_MM = 3.256;

// Rulers: a tick every 2 mm, longer ones every 10 mm, labelled every 20 mm
function drawRuler(svg, origin, vertical, cursor) {
  const box = svg.parentElement.getBoundingClientRect();
  const length = vertical ? box.height : box.width;
  svg.replaceChildren();
  let d = '';
  for (let mm = -80; ; mm += 2) {
    const p = Math.floor(origin + mm * PX_PER_MM) + 0.5;
    if (p > length) break;
    if (p < 2) continue;
    const size = mm % 20 === 0 ? 16 : mm % 10 === 0 ? 6 : 4, end = vertical ? 16 : 17;
    d += vertical ? `M${end - size} ${p}H${end}` : `M${p} ${end - size}V${end}`;
    if (size === 16 && p + 22 < length) {
      const t = document.createElementNS(NS, 'text');
      t.textContent = mm;
      t.setAttribute('fill', '#444');
      if (vertical) {
        t.setAttribute('transform', `translate(10 ${p + 3}) rotate(-90)`);
        t.setAttribute('text-anchor', 'end');
      } else { t.setAttribute('x', p + 1); t.setAttribute('y', 10); }
      svg.append(t);
    }
  }
  const ticks = document.createElementNS(NS, 'path');
  ticks.setAttribute('d', d); ticks.setAttribute('stroke', '#222');
  svg.append(ticks);
  const mark = document.createElementNS(NS, 'path');
  mark.setAttribute('d', vertical ? `M0 ${cursor}H16` : `M${cursor} 0V17`);
  mark.setAttribute('stroke', '#f00');
  svg.append(mark);
}
function ruler(id, ...args) {
  const svg = document.getElementById(id);
  drawRuler(svg, ...args);
  new ResizeObserver(() => drawRuler(svg, ...args)).observe(svg.parentElement);
}
ruler('hruler', 250, false, 1368.5);
ruler('vruler', 186, true, 756.5);

// Seeded generator keeps the coastline and specks identical on every load
let seed = 7;
const rnd = () => (seed = (seed * 16807) % 2147483647) / 2147483647;

const tracts = [[590.7,695.5],[579.3,696.2],[578.3,667.7],[531.7,668.7],[530,570],[576.3,569],[573.5,400],[666.7,400],[667,419.5],[760.3,417.5],[761.3,466.5],[854.5,464.5],[855.5,513.7],[948.7,512],[951,610.5],[997.7,609.5],[999,658.7],[1046,657.5],[1048,756],[1001.5,757.5],[1002.3,807],[862.3,810],[863,859.5],[769.3,861],[771,958],[630,958],[629.3,913.5],[582.5,914.3],[579.3,712],[594.5,711.7]];
const coast = [[594.5,711.7],[596,713],[597,721],[602,723],[608,723],[606,732],[609,743],[614,751],[612,756],[619,768],[622,780],[621,785],[621,797],[617,812],[617,830],[615,845],[612,852],[612,867],[616,881],[625,892],[626,898],[637,904],[657,908],[675,922],[685,924],[700,936],[702,946],[713,940],[720,933],[724,923],[732,923],[734,912],[739,903],[749,893],[748,878],[757,867],[766,857],[786,851],[800,836],[809,831],[822,827],[828,817],[842,806],[858,801],[865,802],[877,806],[906,798],[928,783],[947,776],[962,769],[966,762],[980,750],[995,740],[1013,723],[1020,715],[1020,707],[1024,699],[1020,694],[1002,687],[988,678],[972,667],[971,659],[958,653],[958,632],[950,615],[935,616],[923,622],[917,618],[916,587],[918,572],[905,557],[897,545],[877,529],[856,515],[847,507],[823,498],[797,485],[763,472],[738,465],[727,468],[717,485],[722,468],[718,462],[709,459],[707,473],[706,462],[708,457],[700,450],[687,445],[673,437],[672,445],[673,431],[663,424],[647,418],[633,412],[622,412],[615,417],[610,430],[610,443],[613,467],[627,488],[640,507],[638,527],[628,532],[617,547],[610,560],[605,575],[587,577],[558,607],[555,626],[560,640],[565,648],[566,657],[580,662],[588,680],[590.7,695]];
function rough(points, amount) {
  const out = [points[0]];
  for (let i = 1; i < points.length; i++) {
    const [x0, y0] = points[i - 1], [x1, y1] = points[i];
    const n = Math.max(1, Math.round(Math.hypot(x1 - x0, y1 - y0) / 3));
    for (let k = 1; k < n; k++) out.push([x0 + (x1 - x0) * k / n + (rnd() - .5) * amount, y0 + (y1 - y0) * k / n + (rnd() - .5) * amount]);
    out.push(points[i]);
  }
  return out;
}
const toPath = pts => 'M' + pts.map(p => p[0].toFixed(1) + ' ' + p[1].toFixed(1)).join('L') + 'Z';
document.getElementById('island').setAttribute('d', toPath(tracts.concat(rough(coast, 1.6))));

const lakes = [
  [[845,567],[846,557],[851,553],[850,560],[848,565],[856,563],[864,563],[868,558],[873,557],[878,562],[879,576],[884,578],[880,583],[884,589],[890,593],[882,596],[876,597],[869,600],[876,607],[872,614],[867,610],[860,618],[853,614],[845,616],[842,606],[839,601],[843,592],[842,580]],
  [[858,625],[865,624],[872,625],[875,628],[866,627]],
  [[665,470],[669,455],[672,454],[668,468],[674,471],[678,472],[676,467],[675,455],[679,464],[680,455],[684,463],[686,456],[690,466],[693,459],[702,467],[696,469],[700,471],[704,476],[695,478],[696,486],[700,491],[708,490],[706,496],[701,498],[695,494],[691,493],[687,485],[680,484],[674,479],[668,475]],
  [[727,468],[723,475],[719,479],[721,470]]
];
for (const lake of lakes) {
  const p = document.createElementNS(NS, 'path');
  p.setAttribute('d', toPath(rough([...lake, lake[0]], 1.2)));
  document.getElementById('lakes').append(p);
}

// Speck clusters: centre x, centre y, half width, half height, count
const clusters = [[628,423,12,9,18],[640,452,18,10,7],[688,462,13,8,70],[684,473,14,3,30],[665,468,10,8,12],[655,430,9,8,6],[747,488,8,8,12],[757,505,11,13,20],[785,509,10,10,12],[700,502,12,8,8],[808,525,26,24,18],[818,560,14,26,24],[823,590,13,20,44],[805,623,14,10,45],[826,621,20,9,32],[837,580,6,32,20],[850,562,5,5,6],[838,628,12,3,10],[895,625,14,5,8],[721,572,10,9,10],[614,656,16,10,9],[941,655,14,7,9],[855,722,22,20,13],[889,715,9,18,13],[1020,707,3,6,6],[845,702,16,3,5],[565,646,3,4,8],[625,532,5,6,5],[638,504,3,3,6],[895,655,10,7,5],[770,560,60,40,5],[850,650,60,40,6],[690,850,70,60,7],[590,680,10,24,4],[620,610,30,35,5]];
let specks = '';
for (const [cx, cy, w, h, n] of clusters)
  for (let i = 0; i < n; i++) specks += `M${Math.round(cx + (rnd() + rnd() - 1) * w)} ${Math.round(cy + (rnd() + rnd() - 1) * h) + .5}h${rnd() > .8 ? 2 : 1}`;
document.getElementById('specks').setAttribute('d', specks);
</script>
</body>
</html>
